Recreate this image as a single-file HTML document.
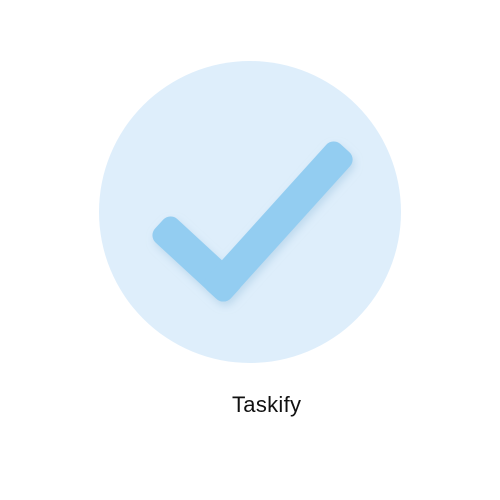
<!DOCTYPE html>
<html><head><style>
html,body{margin:0;padding:0;background:#fff;width:500px;height:500px;overflow:hidden}
.t{position:absolute;left:232px;top:392px;font-family:"Liberation Sans",sans-serif;font-size:22px;color:#111;letter-spacing:0.3px}
</style></head><body>
<svg width="500" height="500" style="position:absolute;left:0;top:0">
<defs><filter id="s" x="-20%" y="-20%" width="140%" height="140%"><feDropShadow dx="2" dy="4" stdDeviation="4" flood-color="#9fc4e0" flood-opacity="0.5"/></filter></defs>
<circle cx="250" cy="212" r="151" fill="#deeefb"/>
<g fill="#93cdf1" filter="url(#s)">
<rect x="-51.5" y="-16" width="103" height="32" rx="10" transform="translate(197,259) rotate(42.7)"/>
<rect x="-99" y="-16" width="198" height="32" rx="10" transform="translate(278.5,221.5) rotate(-47.9)"/>
</g>
</svg>
<div class="t">Taskify</div>
</body></html>
